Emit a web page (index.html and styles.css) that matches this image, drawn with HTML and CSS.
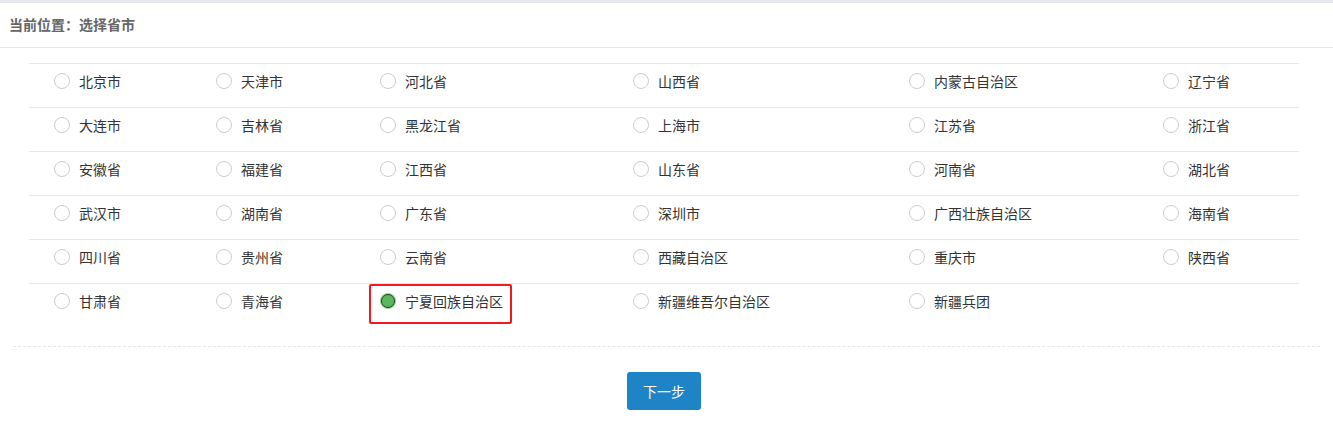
FILE: index.html
```html
<!DOCTYPE html>
<html lang="zh-CN">
<head>
    <meta charset="UTF-8">
    <meta name="viewport" content="width=device-width, initial-scale=1.0">
    <title>选择省市</title>
    <link rel="stylesheet" href="styles.css">
</head>
<body>
<div class="topbar"></div>
<div class="crumb">当前位置：选择省市</div>
<div class="content">
    <table class="region-table">
        <colgroup>
            <col style="width: 162px">
            <col style="width: 164px">
            <col style="width: 253px">
            <col style="width: 276px">
            <col style="width: 254px">
            <col>
        </colgroup>
        <tbody>
        <tr>
            <td><label class="opt"><input type="radio" name="area"><span>北京市</span></label></td>
            <td><label class="opt"><input type="radio" name="area"><span>天津市</span></label></td>
            <td><label class="opt"><input type="radio" name="area"><span>河北省</span></label></td>
            <td><label class="opt"><input type="radio" name="area"><span>山西省</span></label></td>
            <td><label class="opt"><input type="radio" name="area"><span>内蒙古自治区</span></label></td>
            <td><label class="opt"><input type="radio" name="area"><span>辽宁省</span></label></td>
        </tr>
        <tr>
            <td><label class="opt"><input type="radio" name="area"><span>大连市</span></label></td>
            <td><label class="opt"><input type="radio" name="area"><span>吉林省</span></label></td>
            <td><label class="opt"><input type="radio" name="area"><span>黑龙江省</span></label></td>
            <td><label class="opt"><input type="radio" name="area"><span>上海市</span></label></td>
            <td><label class="opt"><input type="radio" name="area"><span>江苏省</span></label></td>
            <td><label class="opt"><input type="radio" name="area"><span>浙江省</span></label></td>
        </tr>
        <tr>
            <td><label class="opt"><input type="radio" name="area"><span>安徽省</span></label></td>
            <td><label class="opt"><input type="radio" name="area"><span>福建省</span></label></td>
            <td><label class="opt"><input type="radio" name="area"><span>江西省</span></label></td>
            <td><label class="opt"><input type="radio" name="area"><span>山东省</span></label></td>
            <td><label class="opt"><input type="radio" name="area"><span>河南省</span></label></td>
            <td><label class="opt"><input type="radio" name="area"><span>湖北省</span></label></td>
        </tr>
        <tr>
            <td><label class="opt"><input type="radio" name="area"><span>武汉市</span></label></td>
            <td><label class="opt"><input type="radio" name="area"><span>湖南省</span></label></td>
            <td><label class="opt"><input type="radio" name="area"><span>广东省</span></label></td>
            <td><label class="opt"><input type="radio" name="area"><span>深圳市</span></label></td>
            <td><label class="opt"><input type="radio" name="area"><span>广西壮族自治区</span></label></td>
            <td><label class="opt"><input type="radio" name="area"><span>海南省</span></label></td>
        </tr>
        <tr>
            <td><label class="opt"><input type="radio" name="area"><span>四川省</span></label></td>
            <td><label class="opt"><input type="radio" name="area"><span>贵州省</span></label></td>
            <td><label class="opt"><input type="radio" name="area"><span>云南省</span></label></td>
            <td><label class="opt"><input type="radio" name="area"><span>西藏自治区</span></label></td>
            <td><label class="opt"><input type="radio" name="area"><span>重庆市</span></label></td>
            <td><label class="opt"><input type="radio" name="area"><span>陕西省</span></label></td>
        </tr>
        <tr class="last">
            <td><label class="opt"><input type="radio" name="area"><span>甘肃省</span></label></td>
            <td><label class="opt"><input type="radio" name="area"><span>青海省</span></label></td>
            <td><label class="opt picked"><input type="radio" name="area" checked><span>宁夏回族自治区</span></label></td>
            <td><label class="opt"><input type="radio" name="area"><span>新疆维吾尔自治区</span></label></td>
            <td><label class="opt"><input type="radio" name="area"><span>新疆兵团</span></label></td>
            <td></td>
        </tr>
        </tbody>
    </table>
</div>
<div class="divider"></div>
<div class="actions">
    <button class="btn-next" type="button">下一步</button>
</div>
</body>
</html>
```

FILE: styles.css
```css
body {
    margin: 0;
    padding: 0;
    background-color: #ffffff;
    font-family: "Noto Sans CJK SC", "Liberation Sans", sans-serif;
    color: #333333;
}
.topbar {
    height: 3px;
    background-color: #e4e8ed;
}
.crumb {
    height: 44px;
    line-height: 43px;
    padding-left: 9px;
    font-size: 14px;
    font-weight: bold;
    color: #666666;
    border-bottom: 1px solid #e8e8e8;
}
.content {
    padding: 15px 34px 0 29px;
}
.region-table {
    width: 100%;
    border-collapse: collapse;
    table-layout: fixed;
}
.region-table td {
    height: 43px;
    padding: 0 0 0 25px;
    vertical-align: top;
    border-top: 1px solid #e8e8e8;
}
.opt {
    display: inline-flex;
    align-items: center;
    height: 16px;
    margin-top: 9px;
    font-size: 14px;
    line-height: 16px;
    color: #333333;
}
.opt input {
    appearance: none;
    -webkit-appearance: none;
    width: 16px;
    height: 16px;
    margin: 0 9px 0 0;
    border: 1px solid #cccccc;
    border-radius: 50%;
    background-color: #ffffff;
    box-sizing: border-box;
}
.opt input:checked {
    width: 14px;
    height: 14px;
    margin: 0 10px 0 1px;
    border: 1px solid #2d3a2d;
    background-color: #5cb85c;
    box-shadow: 0 0 0 1px #8ed88e;
}
.opt.picked {
    position: relative;
}
.opt.picked::after {
    content: "";
    position: absolute;
    left: -11px;
    top: -9px;
    width: 139px;
    height: 36px;
    border: 2px solid #f5191c;
    border-radius: 2px;
}
.divider {
    margin: 19px 13px 0 13px;
    border-top: 1px dashed #e6e6e6;
}
.actions {
    display: flex;
    justify-content: center;
    padding: 25px 5px 0 0;
}
.btn-next {
    width: 74px;
    height: 38px;
    border: none;
    border-radius: 3px;
    background-color: #1f84c6;
    color: #ffffff;
    font-family: "Noto Sans CJK SC", "Liberation Sans", sans-serif;
    font-size: 14px;
    cursor: pointer;
}
```
